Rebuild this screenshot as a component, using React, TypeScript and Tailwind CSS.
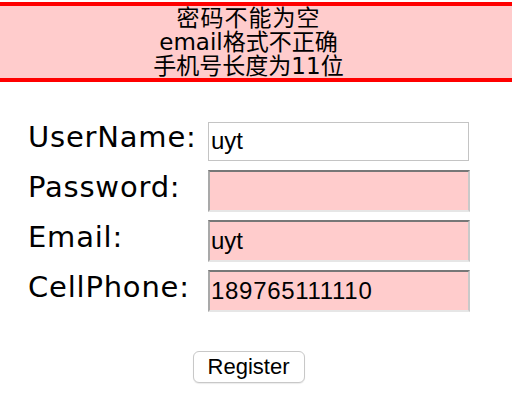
import React from "react";

const labelFont = { fontFamily: '"DejaVu Sans", "Noto Sans", sans-serif' };

export default function App() {
  const pinkInput =
    "h-[42px] w-[262px] border-2 border-t-[#777777] border-l-[#a9a9a9] border-r-[#c9c9c9] border-b-[#e6e6e6] bg-[#ffcccc] px-[1px] text-[24px] text-black outline-none";
  const label = "w-[180px] pb-[7px] text-[29px] leading-[29px] tracking-[0.8px] text-black";
  return (
    <div className="min-h-[402px] w-[512px] bg-white font-['Liberation_Sans',Arial,sans-serif]">
      <div className="h-[2px]" />
      <div
        className="border-y-4 border-[#ff0000] bg-[#ffcccc] pr-[15px] text-center text-[23px] leading-[24px] text-black"
        style={{ fontFamily: '"DejaVu Sans", "Noto Sans CJK SC", sans-serif' }}
      >
        <div className="tracking-[1px]">密码不能为空</div>
        <div>email格式不正确</div>
        <div>手机号长度为11位</div>
      </div>
      <div className="h-[34px]" />
      <div className="ml-[28px] flex flex-col">
        <div className="flex h-[50px] items-center">
          <div className={label} style={labelFont}>
            UserName:
          </div>
          <input
            className="h-[39px] w-[261px] border border-[#c4c4c4] bg-white px-[2px] text-[24px] text-black outline-none"
            defaultValue="uyt"
          />
        </div>
        <div className="flex h-[50px] items-center">
          <div className={label} style={labelFont}>
            Password:
          </div>
          <input type="password" className={pinkInput} defaultValue="" />
        </div>
        <div className="flex h-[50px] items-center">
          <div className={label} style={labelFont}>
            Email:
          </div>
          <input className={pinkInput} defaultValue="uyt" />
        </div>
        <div className="flex h-[50px] items-center">
          <div className={label} style={labelFont}>
            CellPhone:
          </div>
          <input className={pinkInput + " tracking-[0.7px]"} defaultValue="189765111110" />
        </div>
      </div>
      <div className="mt-[35px] flex w-[497px] justify-center">
        <button className="h-[32px] w-[112px] rounded-[6px] border border-[#c8c8c8] bg-white text-[22px] leading-[22px] text-black shadow-[0_1px_1px_rgba(0,0,0,0.08)]">
          Register
        </button>
      </div>
    </div>
  );
}
